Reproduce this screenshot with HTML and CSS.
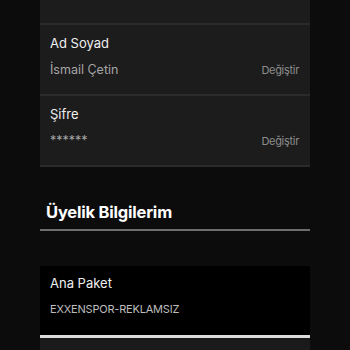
FILE: index.html
```html
<!DOCTYPE html>
<html lang="tr">
<head>
<meta charset="utf-8">
<link rel="stylesheet" href="styles.css">
</head>
<body>
<div class="page">
  <div class="settings">
    <div class="stub"></div>
    <div class="row">
      <div class="row-title">Ad Soyad</div>
      <div class="row-line">
        <span class="row-value">İsmail Çetin</span>
        <span class="row-action">Değiştir</span>
      </div>
    </div>
    <div class="row">
      <div class="row-title">Şifre</div>
      <div class="row-line">
        <span class="row-value">******</span>
        <span class="row-action">Değiştir</span>
      </div>
    </div>
  </div>

  <h2 class="section-title">Üyelik Bilgilerim</h2>

  <div class="package">
    <div class="row-title">Ana Paket</div>
    <div class="row-line">
      <span class="row-value pkg">EXXENSPOR-REKLAMSIZ</span>
    </div>
  </div>
  <div class="next-card"></div>
</div>
</body>
</html>
```

FILE: styles.css
```css
html, body {
  margin: 0;
  padding: 0;
  background: #0c0c0c;
  font-family: Inter, "Noto Sans", "Liberation Sans", sans-serif;
  -webkit-font-smoothing: antialiased;
}

.page {
  width: 270px;
  margin: 0 auto;
}

.settings {
  background: #1c1c1c;
  border-bottom: 2px solid #2b2b2b;
}

.stub {
  height: 23px;
}

.row {
  border-top: 2px solid #2b2b2b;
  padding: 9px 11px 16px 10px;
}

.row-title {
  font-size: 13px;
  line-height: 18px;
  color: #efefef;
}

.row-line {
  display: flex;
  justify-content: space-between;
  align-items: center;
  margin-top: 10px;
  height: 16px;
}

.row-value {
  font-size: 12.5px;
  line-height: 16px;
  color: #a6a6a6;
}

.row-action {
  font-size: 11px;
  line-height: 16px;
  letter-spacing: -0.3px;
  color: #8c8c8c;
}

.section-title {
  margin: 34px 0 0;
  padding: 0 0 6px 6px;
  font-size: 16.5px;
  line-height: 22px;
  font-weight: 700;
  letter-spacing: -0.2px;
  color: #ffffff;
  border-bottom: 2px solid #6e6e6e;
}

.package {
  margin-top: 35px;
  background: #000000;
  padding: 8px 10px 18px;
  border-bottom: 3px solid #dcdcdc;
}

.package .row-line {
  margin-top: 9px;
}

.pkg {
  font-size: 11px;
  letter-spacing: -0.2px;
  color: #bdbdbd;
}

.next-card {
  height: 20px;
  background: #1a1a1a;
}
```
